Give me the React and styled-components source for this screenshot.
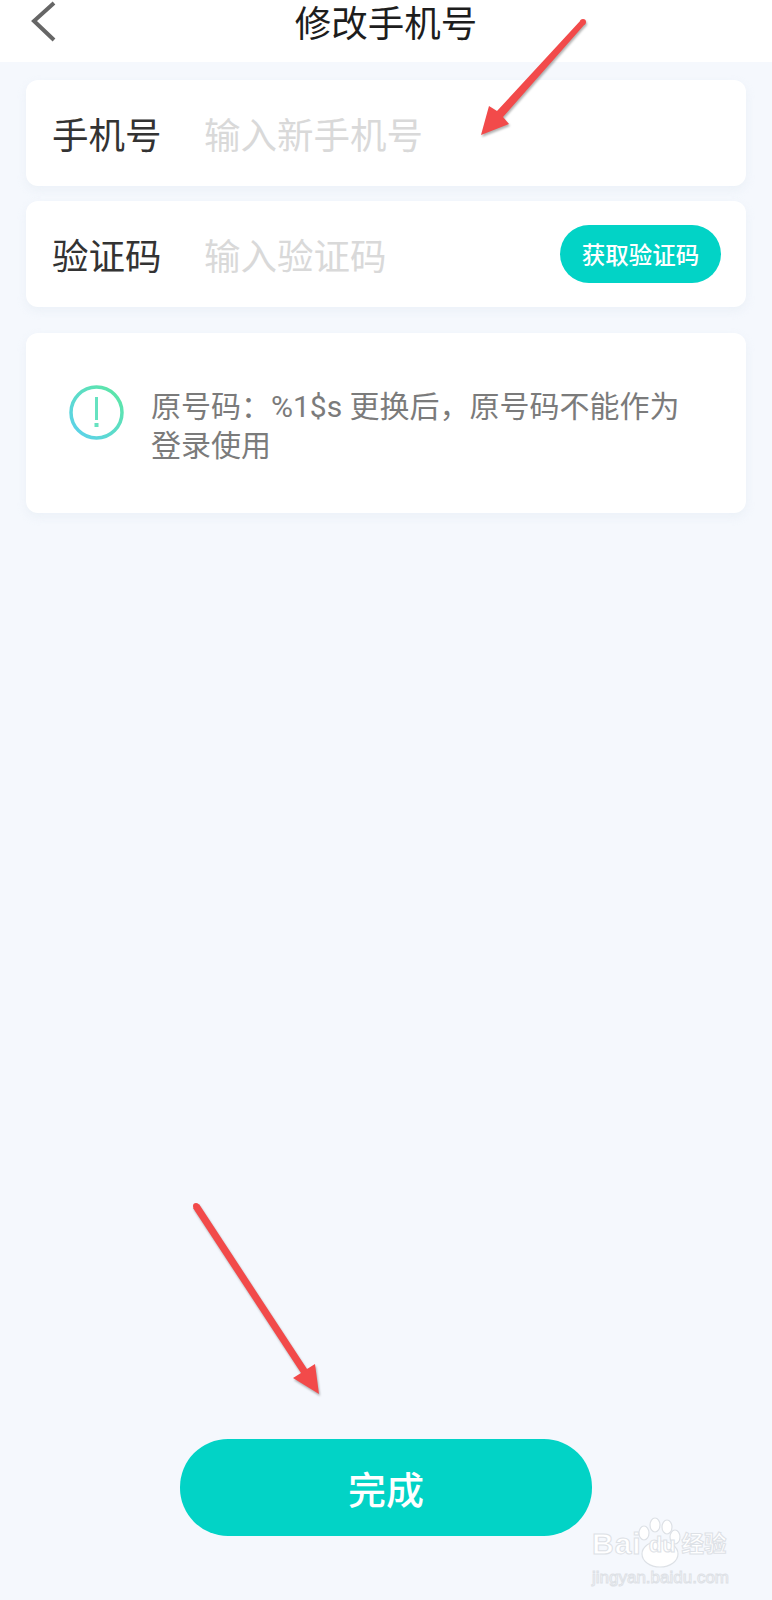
import React from 'react';
import styled, { createGlobalStyle } from 'styled-components';

const GlobalStyle = createGlobalStyle`
    html, body {
        margin: 0;
        padding: 0;
        background: #f5f8fd;
    }
    * {
        box-sizing: border-box;
    }
`;

const Page = styled.div`
    position: relative;
    display: flex;
    flex-direction: column;
    width: 772px;
    height: 1600px;
    overflow: hidden;
    background: #f5f8fd;
    font-family: 'Roboto', 'Noto Sans CJK SC', sans-serif;
`;

const Header = styled.header`
    display: flex;
    align-items: center;
    justify-content: center;
    position: relative;
    height: 62px;
    flex-shrink: 0;
    padding-bottom: 20px;
    background: #ffffff;
    color: #1d1d1d;
    font-size: 36.5px;
`;

const BackButton = styled.svg`
    position: absolute;
    left: 30px;
    top: 0;
`;

const Main = styled.main`
    display: flex;
    flex: 1;
    flex-direction: column;
    padding: 18px 26px 64px;
`;

const Card = styled.div`
    background: #ffffff;
    border-radius: 12px;
    box-shadow: 0 4px 10px rgba(225, 232, 242, 0.45);
`;

const FieldRow = styled(Card)`
    display: flex;
    align-items: center;
    height: 106px;
    margin-bottom: 15px;
    padding: 0 25px 0 26px;
`;

const FieldLabel = styled.span`
    width: 152px;
    flex-shrink: 0;
    color: #333333;
    font-size: 36.5px;
`;

const Placeholder = styled.span`
    flex: 1;
    color: #d9d9d9;
    font-size: 36.5px;
`;

const CodeButton = styled.button`
    width: 161px;
    height: 58px;
    padding: 0;
    border: none;
    border-radius: 29px;
    background: #02d3c6;
    color: #ffffff;
    font-family: inherit;
    font-size: 23.5px;
    font-weight: 500;
`;

const InfoCard = styled(Card)`
    display: flex;
    align-items: flex-start;
    gap: 27px;
    height: 180px;
    margin-top: 11px;
    padding: 52px 40px 0 43px;
`;

const InfoText = styled.p`
    margin: 0;
    padding-top: 2px;
    color: #7b7b7b;
    font-size: 30px;
    line-height: 39px;
`;

const DoneButton = styled.button`
    align-self: center;
    width: 412px;
    height: 97px;
    margin-top: auto;
    padding: 0;
    border: none;
    border-radius: 48px;
    background: #02d3c6;
    color: #ffffff;
    font-family: inherit;
    font-size: 38px;
    font-weight: 500;
`;

const Annotation = styled.svg`
    position: absolute;
    left: 0;
    top: 0;
    pointer-events: none;
`;

const Watermark = styled.div`
    position: absolute;
    left: 592px;
    top: 1522px;
    width: 150px;
    color: #ffffff;
    -webkit-text-stroke: 1px #dde1e6;
    font-family: 'Liberation Sans', 'Noto Sans CJK SC', sans-serif;
`;

const WatermarkLogo = styled.div`
    position: relative;
    display: flex;
    align-items: flex-end;
    height: 40px;
    font-size: 30px;
    font-weight: 700;
    line-height: 36px;
    white-space: nowrap;
`;

const WatermarkBai = styled.span`
    letter-spacing: 1px;
`;

const WatermarkDu = styled.span`
    position: relative;
    z-index: 1;
    margin-left: 7px;
    font-size: 22px;
    line-height: 34px;
`;

const WatermarkCn = styled.span`
    margin-left: 6px;
    font-size: 22.5px;
    line-height: 34px;
`;

const WatermarkPaw = styled.svg`
    position: absolute;
    left: 44px;
    top: -6px;
`;

const WatermarkUrl = styled.div`
    margin-top: 6px;
    font-size: 17px;
    font-weight: 400;
    line-height: 20px;
    white-space: nowrap;
`;

function InfoIcon() {
    return (
        <svg width="55" height="55" viewBox="0 0 55 55" style={{ flexShrink: 0 }}>
            <defs>
                <linearGradient id="infoGrad" x1="1" y1="0" x2="0" y2="1">
                    <stop offset="0" stopColor="#5ce8a0" />
                    <stop offset="1" stopColor="#5cd0f0" />
                </linearGradient>
            </defs>
            <circle cx="27.5" cy="27.5" r="25.5" fill="none" stroke="url(#infoGrad)" strokeWidth="3.5" />
            <rect x="26" y="12" width="3" height="23" fill="#66e2c0" />
            <rect x="25.5" y="38" width="4" height="4" fill="#66e2c0" />
        </svg>
    );
}

// red pointer drawn over the screenshot, shaft gets thicker towards the head
function Arrow({ points, tail }) {
    return (
        <g style={{ filter: 'drop-shadow(1px 2px 1px rgba(0,0,0,0.3))' }}>
            <circle cx={tail[0]} cy={tail[1]} r="3" fill="#f24a4a" />
            <polygon points={points} fill="#f24a4a" />
        </g>
    );
}

function App() {
    return (
        <Page>
            <GlobalStyle />
            <Header>
                <BackButton width="30" height="44" viewBox="0 0 30 44">
                    <path d="M24 3 L4 21 L24 40" fill="none" stroke="#666666" strokeWidth="4" />
                </BackButton>
                修改手机号
            </Header>
            <Main>
                <FieldRow>
                    <FieldLabel>手机号</FieldLabel>
                    <Placeholder>输入新手机号</Placeholder>
                </FieldRow>
                <FieldRow>
                    <FieldLabel>验证码</FieldLabel>
                    <Placeholder>输入验证码</Placeholder>
                    <CodeButton>获取验证码</CodeButton>
                </FieldRow>
                <InfoCard>
                    <InfoIcon />
                    <InfoText>
                        原号码：%1$s 更换后，原号码不能作为
                        <br />
                        登录使用
                    </InfoText>
                </InfoCard>
                <DoneButton>完成</DoneButton>
            </Main>
            <Annotation width="772" height="1600" viewBox="0 0 772 1600">
                <Arrow
                    tail={[583, 22]}
                    points="585,24 503,117 509,124 481,135 489,106 497,111 581,20"
                />
                <Arrow
                    tail={[196, 1206]}
                    points="199,1204 307,1369 315,1364 319,1394 293,1378 301,1373 193,1208"
                />
            </Annotation>
            <Watermark>
                <WatermarkLogo>
                    <WatermarkBai>Bai</WatermarkBai>
                    <WatermarkPaw width="46" height="56" viewBox="0 0 46 56">
                        <g fill="#ffffff" stroke="#dde1e6" strokeWidth="1.2">
                            <ellipse cx="8" cy="17" rx="5" ry="7" />
                            <ellipse cx="19" cy="9" rx="5" ry="7" />
                            <ellipse cx="31" cy="11" rx="5" ry="7" />
                            <ellipse cx="39" cy="21" rx="5" ry="7" />
                            <ellipse cx="24" cy="38" rx="18" ry="13" />
                        </g>
                    </WatermarkPaw>
                    <WatermarkDu>du</WatermarkDu>
                    <WatermarkCn>经验</WatermarkCn>
                </WatermarkLogo>
                <WatermarkUrl>jingyan.baidu.com</WatermarkUrl>
            </Watermark>
        </Page>
    );
}

export default App;
